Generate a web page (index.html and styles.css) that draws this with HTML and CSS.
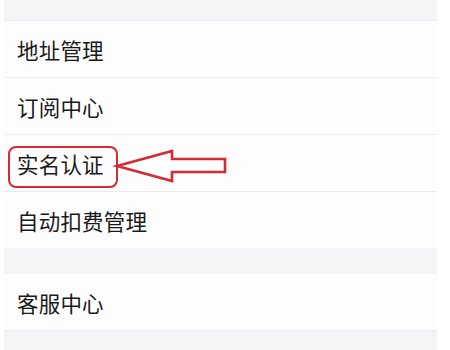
FILE: index.html
```html
<!DOCTYPE html>
<html lang="zh-CN">
<head>
<meta charset="utf-8">
<link rel="stylesheet" href="styles.css">
</head>
<body>
<div class="list">
  <div class="gap gap-top"></div>
  <div class="row">地址管理</div>
  <div class="row">订阅中心</div>
  <div class="row row-marked">实名认证
    <span class="mark-box"></span>
    <svg class="mark-arrow" width="120" height="40" viewBox="110 145 120 40">
      <polygon points="117,165 172,150 172,158 225,158 225,171 172,171 172,180" fill="#fff" stroke="#d42a32" stroke-width="2.6" stroke-linejoin="miter"/>
    </svg>
  </div>
  <div class="row row-last">自动扣费管理</div>
  <div class="gap gap-mid"></div>
  <div class="row row-last">客服中心</div>
  <div class="gap gap-bottom"></div>
</div>
</body>
</html>
```

FILE: styles.css
```css
html, body {
  margin: 0;
  padding: 0;
  background: #ffffff;
}
body {
  width: 450px;
  height: 350px;
  overflow: hidden;
  font-family: "Noto Sans CJK SC", "Noto Sans", sans-serif;
}
.list {
  margin-left: 4px;
  width: 433px;
  display: flex;
  flex-direction: column;
}
.gap {
  background: #f5f5f7;
}
.gap-top {
  height: 20px;
  border-bottom: 1px solid #ededf0;
}
.gap-mid {
  height: 26px;
}
.gap-bottom {
  height: 21px;
  border-top: 1px solid #ededf0;
}
.row {
  position: relative;
  height: 56px;
  border-bottom: 1px solid #ececef;
  background: #fdfdfd;
  padding-left: 13px;
  display: flex;
  align-items: center;
  font-size: 21.5px;
  font-weight: 400;
  color: #1a1a1a;
  letter-spacing: 0.2px;
}
.row-last {
  border-bottom: none;
}
.mark-box {
  position: absolute;
  left: 4px;
  top: 11px;
  width: 106px;
  height: 38px;
  border: 2.5px solid #d42a32;
  border-radius: 8px;
}
.mark-arrow {
  position: absolute;
  left: 106px;
  top: 11px;
}
```
